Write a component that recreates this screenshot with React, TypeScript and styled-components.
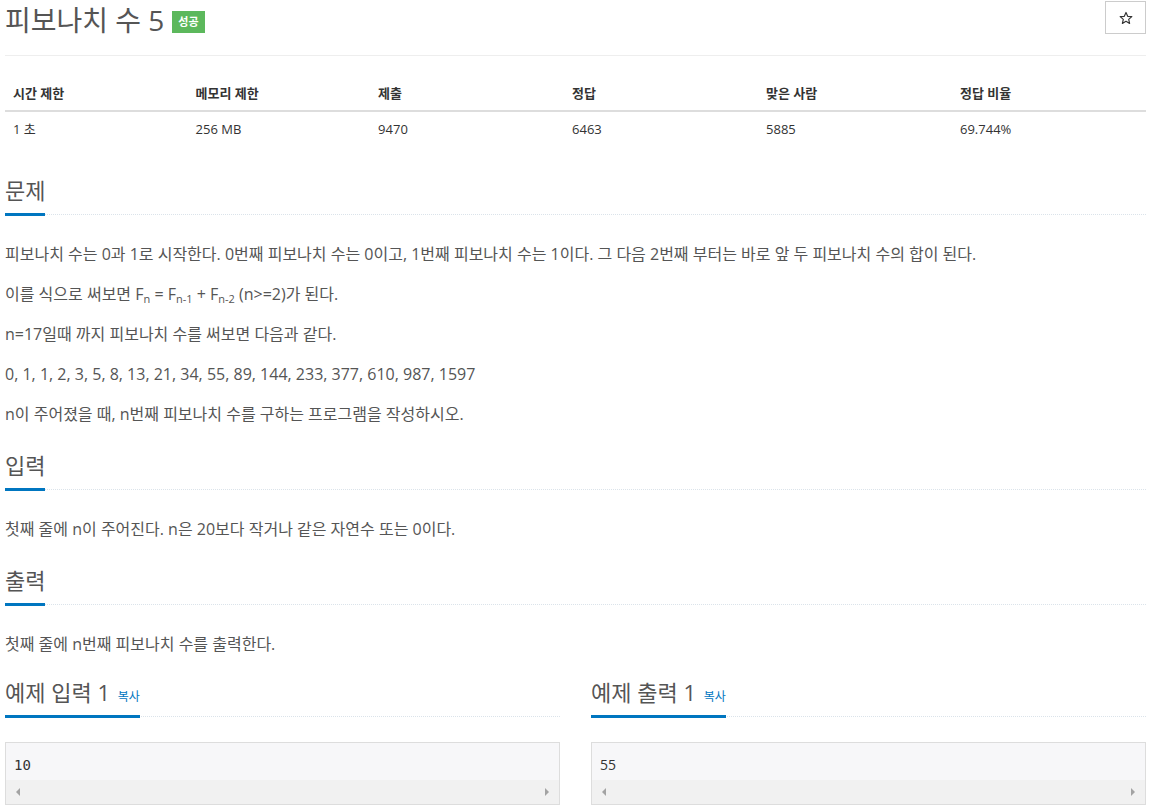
import styled, { createGlobalStyle } from "styled-components";

const GlobalStyle = createGlobalStyle`
  body {
    margin: 0;
    background: #fff;
    color: #333;
    font-family: "Open Sans", "Noto Sans CJK KR", sans-serif;
  }
`;

const stats = [
  { label: "시간 제한", value: "1 초", width: "16%" },
  { label: "메모리 제한", value: "256 MB", width: "16%" },
  { label: "제출", value: "9470", width: "17%" },
  { label: "정답", value: "6463", width: "17%" },
  { label: "맞은 사람", value: "5885", width: "17%" },
  { label: "정답 비율", value: "69.744%", width: "17%" },
];

const StarIcon = () => (
  <svg width="14" height="14" viewBox="0 0 24 24" fill="none">
    <path
      d="M12 2.5l2.9 6.6 7.1.6-5.4 4.7 1.6 7-6.2-3.7-6.2 3.7 1.6-7L2 9.7l7.1-.6z"
      stroke="#333"
      strokeWidth="2"
      strokeLinejoin="round"
    />
  </svg>
);

const samples = [
  { title: "예제 입력 1", data: "10", mono: true },
  { title: "예제 출력 1", data: "55", mono: false },
];

const App = () => {
  return (
    <Page>
      <GlobalStyle />
      <TitleBar>
        <Title>
          피보나치 수 5 <Badge>성공</Badge>
        </Title>
        <StarButton aria-label="즐겨찾기">
          <StarIcon />
        </StarButton>
      </TitleBar>

      <StatTable>
        <thead>
          <tr>
            {stats.map((s) => (
              <Th key={s.label} style={{ width: s.width }}>
                {s.label}
              </Th>
            ))}
          </tr>
        </thead>
        <tbody>
          <tr>
            {stats.map((s) => (
              <Td key={s.label}>{s.value}</Td>
            ))}
          </tr>
        </tbody>
      </StatTable>

      <Section>
        <Headline>
          <HeadTitle>문제</HeadTitle>
        </Headline>
        <Text>
          <p>
            피보나치 수는 0과 1로 시작한다. 0번째 피보나치 수는 0이고, 1번째
            피보나치 수는 1이다. 그 다음 2번째 부터는 바로 앞 두 피보나치 수의
            합이 된다.
          </p>
          <p>
            이를 식으로 써보면 F<sub>n</sub> = F<sub>n-1</sub> + F
            <sub>n-2</sub> (n&gt;=2)가 된다.
          </p>
          <p>n=17일때 까지 피보나치 수를 써보면 다음과 같다.</p>
          <p>0, 1, 1, 2, 3, 5, 8, 13, 21, 34, 55, 89, 144, 233, 377, 610, 987, 1597</p>
          <p>n이 주어졌을 때, n번째 피보나치 수를 구하는 프로그램을 작성하시오.</p>
        </Text>
      </Section>

      <Section>
        <Headline>
          <HeadTitle>입력</HeadTitle>
        </Headline>
        <Text>
          <p>첫째 줄에 n이 주어진다. n은 20보다 작거나 같은 자연수 또는 0이다.</p>
        </Text>
      </Section>

      <Section>
        <Headline>
          <HeadTitle>출력</HeadTitle>
        </Headline>
        <Text>
          <p>첫째 줄에 n번째 피보나치 수를 출력한다.</p>
        </Text>
      </Section>

      <Samples>
        {samples.map((s) => (
          <SampleColumn key={s.title}>
            <Headline>
              <HeadTitle compact>
                {s.title} <Copy>복사</Copy>
              </HeadTitle>
            </Headline>
            <SampleBox>
              <SampleData mono={s.mono}>{s.data}</SampleData>
              <ScrollBar>
                <Arrow dir="left" />
                <Arrow dir="right" />
              </ScrollBar>
            </SampleBox>
          </SampleColumn>
        ))}
      </Samples>
    </Page>
  );
};

const Page = styled.div`
  padding: 0 5px;
`;

const TitleBar = styled.div`
  display: flex;
  justify-content: space-between;
  align-items: flex-start;
  padding: 2px 0 17px;
  border-bottom: 1px solid #eee;
`;

const Title = styled.h1`
  margin: 0;
  font-size: 28px;
  font-weight: 400;
  line-height: 36px;
  color: #555;
  display: flex;
  align-items: center;
  gap: 8px;
`;

const Badge = styled.span`
  display: inline-block;
  background: #5cb85c;
  color: #fff;
  font-size: 11px;
  font-weight: 700;
  line-height: 22px;
  padding: 0 6px;
  margin-top: 4px;
`;

const StarButton = styled.button`
  width: 41px;
  height: 33px;
  margin-top: -1px;
  background: #fff;
  border: 1px solid #ccc;
  padding: 0;
  display: flex;
  align-items: center;
  justify-content: center;
`;

const StatTable = styled.table`
  width: 100%;
  border-collapse: collapse;
  margin-top: 20px;
  margin-bottom: 29px;
  font-size: 13px;
`;

const Th = styled.th`
  text-align: left;
  font-weight: 700;
  padding: 8px;
  line-height: 18px;
  border-bottom: 2px solid #ddd;
`;

const Td = styled.td`
  padding: 8px;
  line-height: 18px;
`;

const Section = styled.section`
  margin-top: 16px;
`;

const Headline = styled.div`
  display: flex;
  border-bottom: 1px dotted #dbe3ea;
`;

const HeadTitle = styled.h2<{ compact?: boolean }>`
  margin: 0 0 -2px;
  font-size: 22px;
  font-weight: 400;
  line-height: 30px;
  padding-bottom: ${(p) => (p.compact ? "3px" : "8px")};
  color: #555;
  border-bottom: 3px solid #0076c0;
`;

const Copy = styled.span`
  font-size: 12px;
  color: #0076c0;
  margin-left: 2px;
`;

const Text = styled.div`
  font-size: 16px;
  color: #555;
  padding-top: 19px;

  p {
    margin: 0;
    line-height: 40px;
  }

  sub {
    font-size: 11px;
    vertical-align: -3px;
    line-height: 0;
  }
`;

const Samples = styled.div`
  display: grid;
  grid-template-columns: 1fr 1fr;
  column-gap: 31px;
  margin-top: 13px;
`;

const SampleColumn = styled.div`
  min-width: 0;
`;

const SampleBox = styled.div`
  margin-top: 25px;
  border: 1px solid #ddd;
  background: #f7f7f9;
`;

const SampleData = styled.pre<{ mono?: boolean }>`
  margin: 0;
  padding: 12px 8px 5px;
  font-family: ${(p) =>
    p.mono ? '"DejaVu Sans Mono", monospace' : '"Open Sans", sans-serif'};
  font-size: 14px;
  line-height: 20px;
  color: #333;
`;

const ScrollBar = styled.div`
  height: 24px;
  background: #f1f1f1;
  display: flex;
  justify-content: space-between;
  align-items: center;
  padding: 0 10px;
`;

const Arrow = styled.span<{ dir: "left" | "right" }>`
  width: 0;
  height: 0;
  border-top: 4px solid transparent;
  border-bottom: 4px solid transparent;
  ${(p) =>
    p.dir === "left"
      ? "border-right: 4px solid #a3a3a3;"
      : "border-left: 4px solid #a3a3a3;"}
`;

export default App;
